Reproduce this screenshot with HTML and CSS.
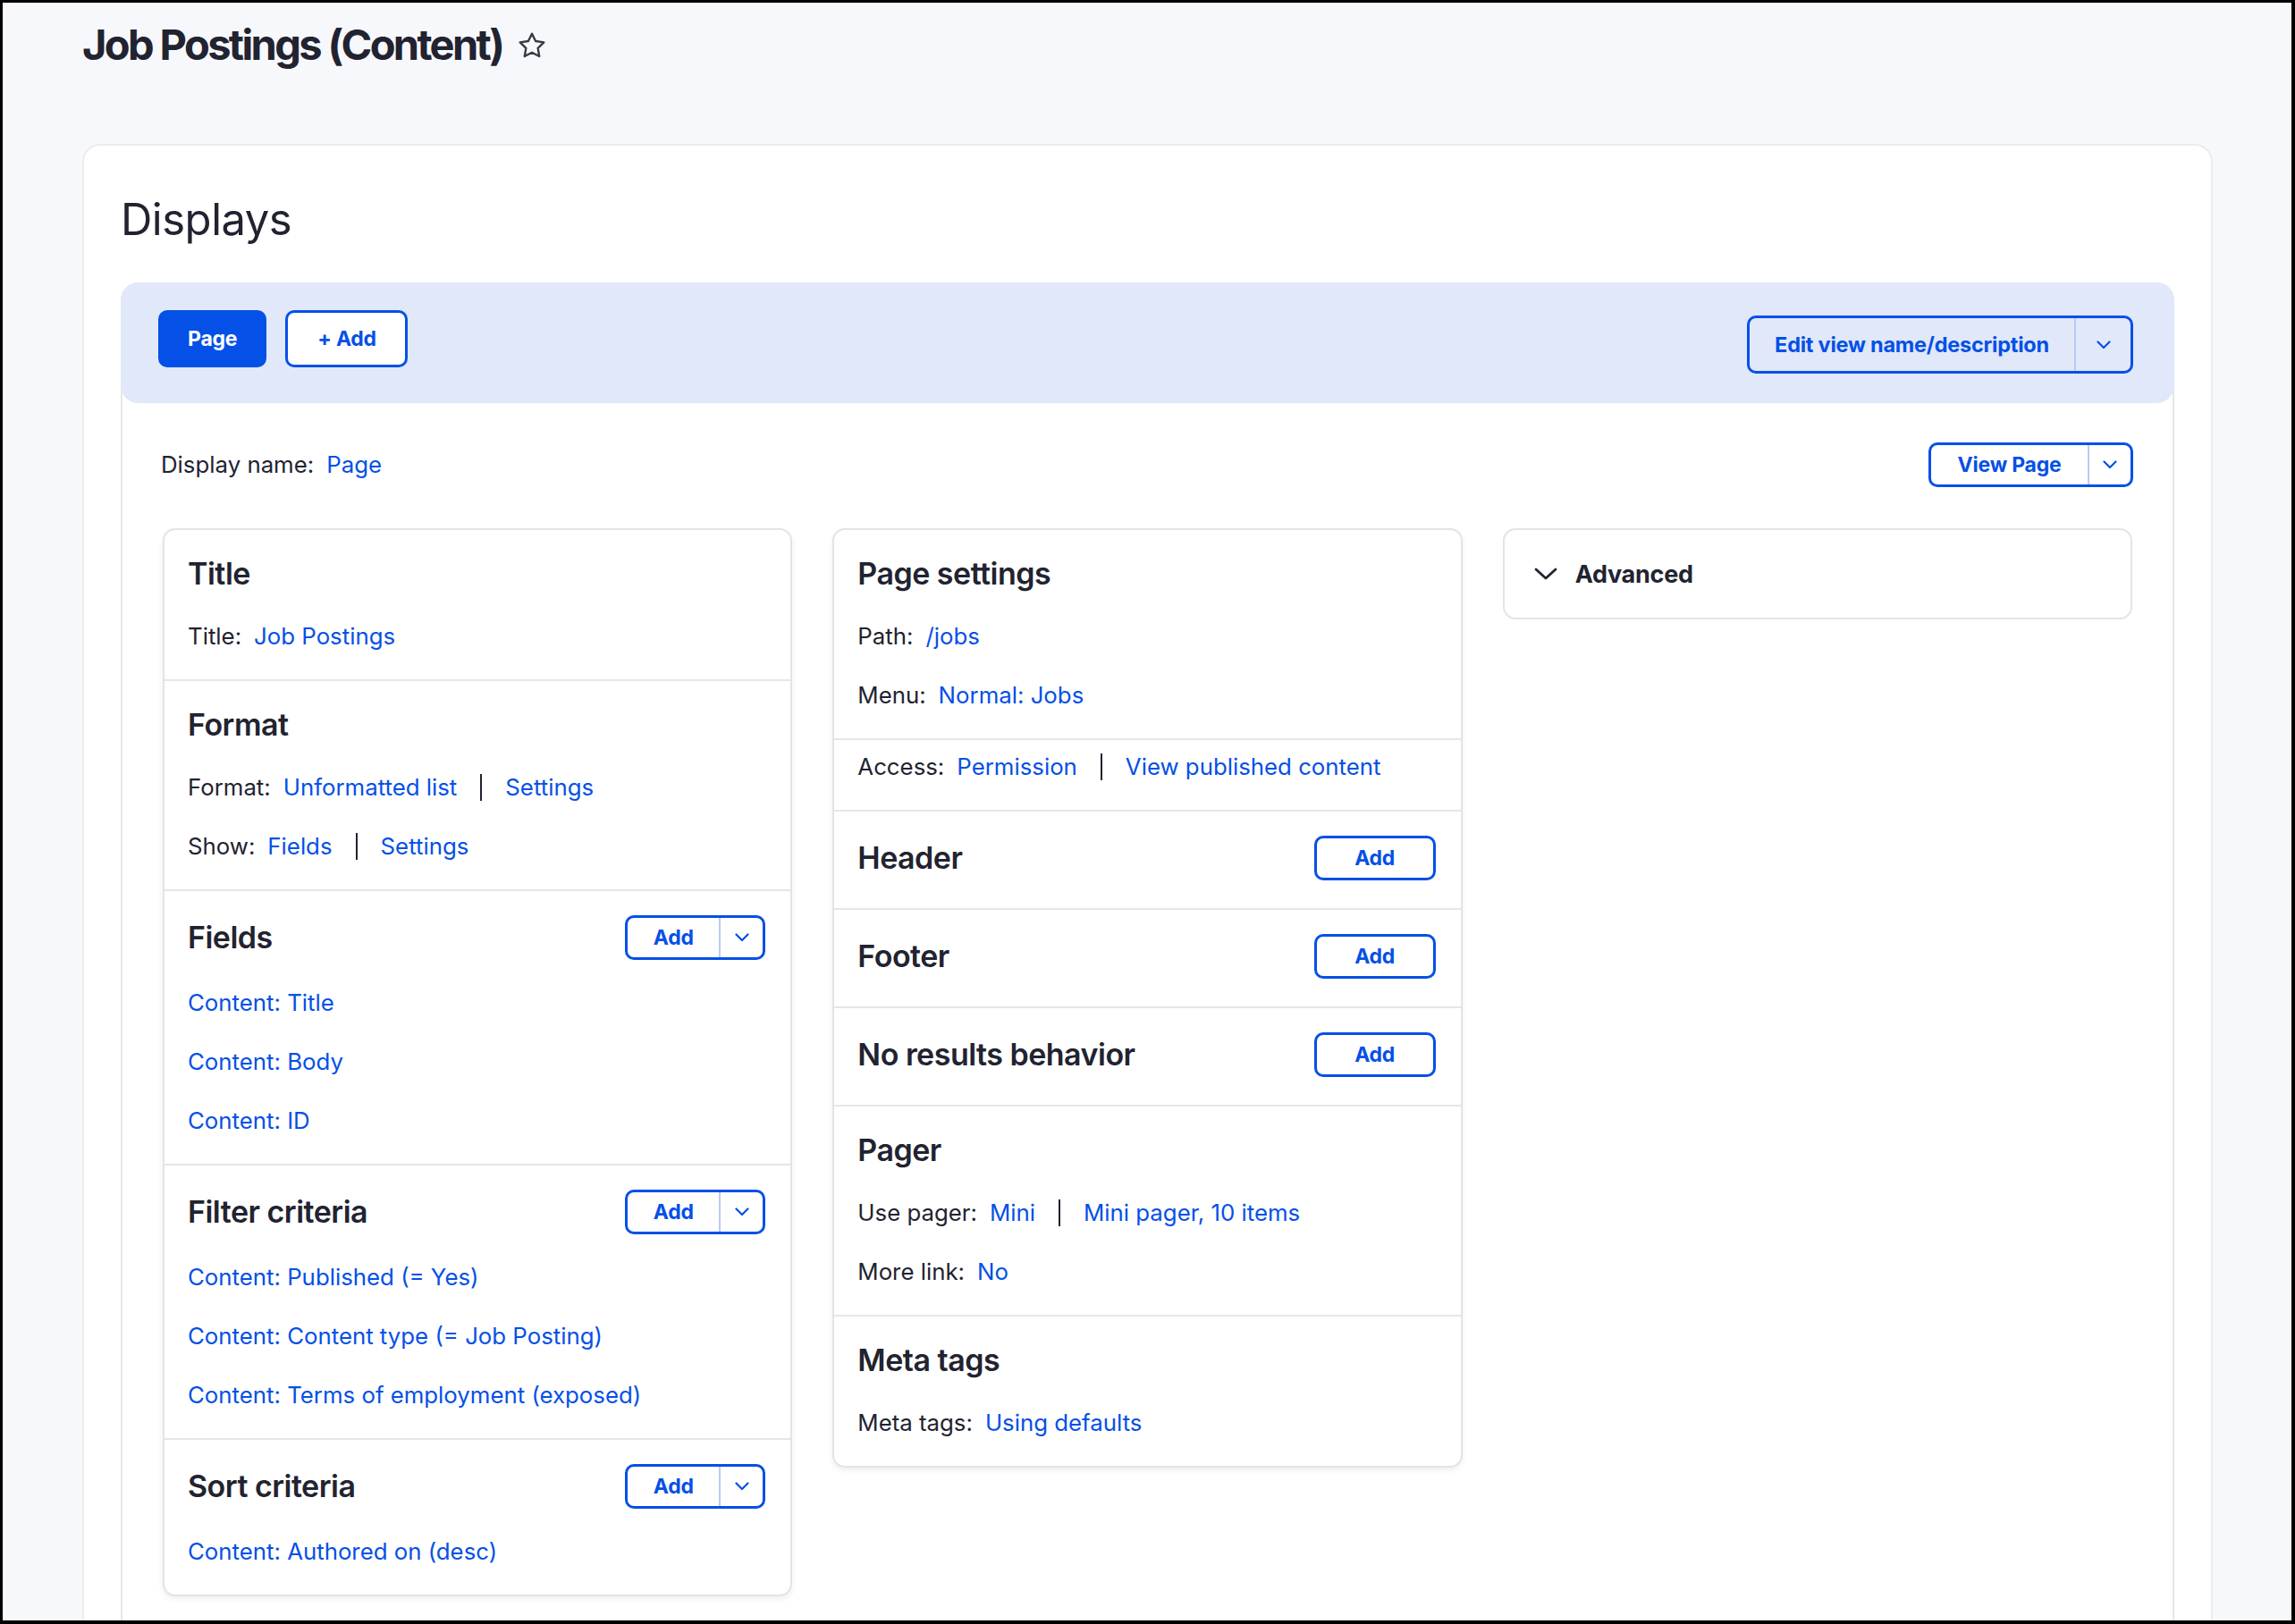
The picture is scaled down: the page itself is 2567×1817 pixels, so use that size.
FILE: index.html
```html
<!DOCTYPE html>
<html lang="en">
<head>
<meta charset="utf-8">
<title>Job Postings (Content)</title>
<link rel="stylesheet" href="styles.css">
</head>
<body>
<div class="frame">
  <header class="page-head">
    <h1 class="page-title">Job Postings (Content)</h1>
    <svg class="star" viewBox="0 0 24 24" width="34" height="34" aria-hidden="true"><path d="M12 2.6l2.9 5.9 6.5.95-4.7 4.58 1.1 6.47L12 17.45l-5.8 3.05 1.1-6.47-4.7-4.58 6.5-.95z" fill="none" stroke="#3a3b40" stroke-width="1.7" stroke-linejoin="round"/></svg>
  </header>

  <main class="card">
    <h2 class="displays-title">Displays</h2>
    <div class="display-box">
      <div class="tabs-bar">
        <div class="tabs">
          <a class="tab tab--active">Page</a>
          <a class="tab tab--add">+ Add</a>
        </div>
        <div class="dropbutton dropbutton--lg">
          <span class="dropbutton__main">Edit view name/description</span>
          <span class="dropbutton__toggle"><svg viewBox="0 0 16 10" width="16" height="10"><polyline points="1.5,1.5 8,8 14.5,1.5" fill="none" stroke="currentColor" stroke-width="2.2" stroke-linecap="round" stroke-linejoin="round"/></svg></span>
        </div>
      </div>

      <div class="display-body">
        <div class="name-row">
          <div class="row"><span class="label">Display name:</span><a class="link">Page</a></div>
          <div class="dropbutton dropbutton--md">
            <span class="dropbutton__main">View Page</span>
            <span class="dropbutton__toggle"><svg viewBox="0 0 16 10" width="16" height="10"><polyline points="1.5,1.5 8,8 14.5,1.5" fill="none" stroke="currentColor" stroke-width="2.2" stroke-linecap="round" stroke-linejoin="round"/></svg></span>
          </div>
        </div>

        <div class="columns">
          <div class="col-card">
            <section class="bucket">
              <div class="bucket-head"><h3>Title</h3></div>
              <div class="row"><span class="label">Title:</span><a class="link">Job Postings</a></div>
            </section>
            <section class="bucket">
              <div class="bucket-head"><h3>Format</h3></div>
              <div class="row"><span class="label">Format:</span><a class="link">Unformatted list</a><span class="sep"></span><a class="link">Settings</a></div>
              <div class="row"><span class="label">Show:</span><a class="link">Fields</a><span class="sep"></span><a class="link">Settings</a></div>
            </section>
            <section class="bucket">
              <div class="bucket-head bucket-head--btn"><h3>Fields</h3>
                <div class="dropbutton dropbutton--sm"><span class="dropbutton__main">Add</span><span class="dropbutton__toggle"><svg viewBox="0 0 16 10" width="16" height="10"><polyline points="1.5,1.5 8,8 14.5,1.5" fill="none" stroke="currentColor" stroke-width="2.2" stroke-linecap="round" stroke-linejoin="round"/></svg></span></div>
              </div>
              <div class="row"><a class="link">Content: Title</a></div>
              <div class="row"><a class="link">Content: Body</a></div>
              <div class="row"><a class="link">Content: ID</a></div>
            </section>
            <section class="bucket">
              <div class="bucket-head bucket-head--btn"><h3>Filter criteria</h3>
                <div class="dropbutton dropbutton--sm"><span class="dropbutton__main">Add</span><span class="dropbutton__toggle"><svg viewBox="0 0 16 10" width="16" height="10"><polyline points="1.5,1.5 8,8 14.5,1.5" fill="none" stroke="currentColor" stroke-width="2.2" stroke-linecap="round" stroke-linejoin="round"/></svg></span></div>
              </div>
              <div class="row"><a class="link">Content: Published (= Yes)</a></div>
              <div class="row"><a class="link">Content: Content type (= Job Posting)</a></div>
              <div class="row"><a class="link">Content: Terms of employment (exposed)</a></div>
            </section>
            <section class="bucket">
              <div class="bucket-head bucket-head--btn"><h3>Sort criteria</h3>
                <div class="dropbutton dropbutton--sm"><span class="dropbutton__main">Add</span><span class="dropbutton__toggle"><svg viewBox="0 0 16 10" width="16" height="10"><polyline points="1.5,1.5 8,8 14.5,1.5" fill="none" stroke="currentColor" stroke-width="2.2" stroke-linecap="round" stroke-linejoin="round"/></svg></span></div>
              </div>
              <div class="row"><a class="link">Content: Authored on (desc)</a></div>
            </section>
          </div>

          <div class="col-card">
            <section class="bucket">
              <div class="bucket-head"><h3>Page settings</h3></div>
              <div class="row"><span class="label">Path:</span><a class="link">/jobs</a></div>
              <div class="row"><span class="label">Menu:</span><a class="link">Normal: Jobs</a></div>
            </section>
            <section class="bucket bucket--plain">
              <div class="row"><span class="label">Access:</span><a class="link">Permission</a><span class="sep"></span><a class="link">View published content</a></div>
            </section>
            <section class="bucket bucket--btn-only">
              <div class="bucket-head bucket-head--btn bucket-head--only"><h3>Header</h3><a class="button-sm">Add</a></div>
            </section>
            <section class="bucket bucket--btn-only">
              <div class="bucket-head bucket-head--btn bucket-head--only"><h3>Footer</h3><a class="button-sm">Add</a></div>
            </section>
            <section class="bucket bucket--btn-only">
              <div class="bucket-head bucket-head--btn bucket-head--only"><h3>No results behavior</h3><a class="button-sm">Add</a></div>
            </section>
            <section class="bucket">
              <div class="bucket-head"><h3>Pager</h3></div>
              <div class="row"><span class="label">Use pager:</span><a class="link">Mini</a><span class="sep"></span><a class="link">Mini pager, 10 items</a></div>
              <div class="row"><span class="label">More link:</span><a class="link">No</a></div>
            </section>
            <section class="bucket">
              <div class="bucket-head"><h3>Meta tags</h3></div>
              <div class="row"><span class="label">Meta tags:</span><a class="link">Using defaults</a></div>
            </section>
          </div>

          <div class="advanced">
            <svg class="advanced__chevron" viewBox="0 0 26 14" width="26" height="14"><polyline points="2,2 13,12 24,2" fill="none" stroke="#222330" stroke-width="2.8" stroke-linecap="round" stroke-linejoin="round"/></svg>
            <span class="advanced__label">Advanced</span>
          </div>
        </div>
      </div>
    </div>
  </main>
</div>
</body>
</html>
```

FILE: styles.css
```css
* { box-sizing: border-box; }

html, body {
  margin: 0;
  padding: 0;
}

body {
  font-family: Inter, "Noto Sans", "Liberation Sans", sans-serif;
  color: #222330;
  background: #000;
}

a { text-decoration: none; cursor: pointer; }

.frame {
  width: 2567px;
  height: 1817px;
  border-style: solid;
  border-color: #000;
  border-width: 3px 4px 4px 3px;
  background: #f7f8fc;
  overflow: hidden;
}

/* Page header */
.page-head {
  display: flex;
  align-items: center;
  gap: 16px;
  padding: 18px 0 0 89px;
}

.page-title {
  margin: 0;
  font-size: 47px;
  line-height: 58px;
  font-weight: 700;
  letter-spacing: -0.056em;
}

.star { display: block; margin-top: 2px; }

/* Main card */
.card {
  margin: 82px 88px 0 89px;
  background: #fff;
  border: 2px solid #ececf0;
  border-radius: 20px;
  padding: 54px 41px 0 41px;
  min-height: 1700px;
}

.displays-title {
  margin: 0 0 41px;
  font-size: 49px;
  line-height: 58px;
  font-weight: 400;
  letter-spacing: -0.01em;
}

.display-box {
  border: 2px solid #e6e6ea;
  border-radius: 20px;
  min-height: 1600px;
}

.tabs-bar {
  display: flex;
  justify-content: space-between;
  align-items: flex-start;
  margin: -2px -2px 0;
  height: 135px;
  padding: 31px 46px 0 42px;
  background: #e0e8f9;
  border-radius: 20px;
}

.tabs { display: flex; gap: 21px; }

.tab {
  display: flex;
  align-items: center;
  height: 64px;
  padding: 0 30px;
  border: 3px solid #0550e6;
  border-radius: 10px;
  background: #fff;
  color: #0550e6;
  font-size: 23px;
  font-weight: 700;
  letter-spacing: -0.01em;
  white-space: pre;
}

.tab--add { padding: 0 32px 0 33px; }

.tab--active {
  background: #0550e6;
  color: #fff;
}

/* Dropbuttons */
.dropbutton {
  display: flex;
  align-items: stretch;
  border: 3px solid #0550e6;
  border-radius: 10px;
  color: #0550e6;
  font-weight: 700;
  letter-spacing: -0.01em;
  background: #fff;
}

.dropbutton__main {
  display: flex;
  align-items: center;
  justify-content: center;
}

.dropbutton__toggle {
  display: flex;
  align-items: center;
  justify-content: center;
  border-left: 2px solid #b9cbf3;
}

.dropbutton svg { display: block; }

.dropbutton--lg {
  margin-top: 6px;
  height: 65px;
  font-size: 23.5px;
  background: transparent;
}
.dropbutton--lg .dropbutton__main { width: 363px; }
.dropbutton--lg .dropbutton__toggle { width: 63px; }

.dropbutton--md {
  height: 50px;
  font-size: 23px;
}
.dropbutton--md .dropbutton__main { width: 175px; }
.dropbutton--md .dropbutton__toggle { width: 48px; }

.dropbutton--sm {
  height: 50px;
  font-size: 23px;
}
.dropbutton--sm .dropbutton__main { width: 102px; }
.dropbutton--sm .dropbutton__toggle { width: 49px; }

.button-sm {
  display: flex;
  align-items: center;
  justify-content: center;
  width: 136px;
  height: 50px;
  border: 3px solid #0550e6;
  border-radius: 10px;
  color: #0550e6;
  font-size: 23px;
  font-weight: 700;
  letter-spacing: -0.01em;
}

/* Display body */
.name-row {
  display: flex;
  justify-content: space-between;
  align-items: center;
  margin-top: 44px;
  height: 50px;
  padding: 0 44px 0 43px;
}

.columns {
  display: grid;
  grid-template-columns: repeat(3, 1fr);
  gap: 45px;
  align-items: start;
  margin-top: 46px;
  padding: 0 45px;
}

.col-card {
  background: #fff;
  border: 2px solid #e4e4e8;
  border-radius: 14px;
  box-shadow: 0 3px 6px rgba(0, 0, 0, 0.07);
  overflow: hidden;
}

.bucket {
  padding: 27px 28px 28px 26px;
}

.bucket + .bucket { border-top: 2px solid #e6e6ea; }

.bucket--plain { padding-top: 10px; }

.bucket--btn-only { padding-top: 27px; padding-bottom: 31px; }

.bucket-head {
  display: flex;
  justify-content: space-between;
  align-items: center;
  min-height: 44px;
  margin-bottom: 28px;
}

.bucket-head--btn { min-height: 50px; }
.bucket-head--only { margin-bottom: 0; }

.bucket-head h3 {
  margin: 0;
  font-size: 34px;
  line-height: 44px;
  font-weight: 600;
  letter-spacing: -0.015em;
}

.row {
  display: flex;
  align-items: center;
  height: 40px;
  font-size: 25.8px;
  line-height: 40px;
}

.bucket .row + .row { margin-top: 26px; }

.label { margin-right: 14px; }

.link { color: #0550e6; }

.sep {
  display: block;
  width: 2px;
  height: 30px;
  margin: 0 26px;
  background: #222330;
}

/* Advanced */
.advanced {
  display: flex;
  align-items: center;
  gap: 20px;
  height: 102px;
  padding-left: 33px;
  border: 2px solid #e4e4e8;
  border-radius: 14px;
  background: #fff;
}

.advanced__chevron { display: block; }

.advanced__label {
  font-size: 27px;
  font-weight: 700;
  letter-spacing: -0.01em;
}
```
